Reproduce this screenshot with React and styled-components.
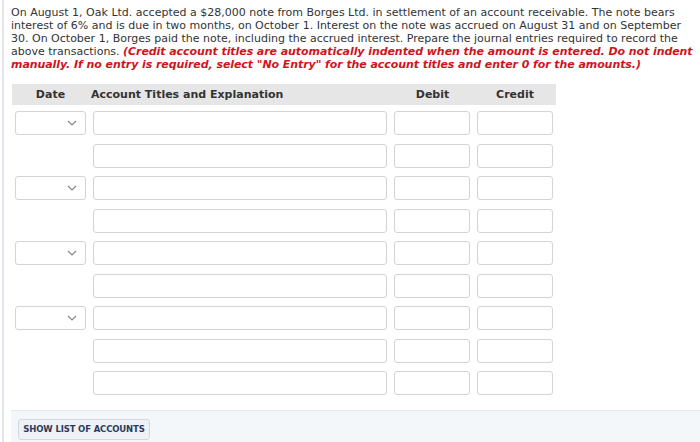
import React from 'react'
import styled, { createGlobalStyle } from 'styled-components'

const Global = createGlobalStyle`
  html, body {
    margin: 0;
    padding: 0;
    background: #fff;
  }
  body {
    font-family: 'DejaVu Sans', Verdana, sans-serif;
    color: #333;
  }
`

const Page = styled.div`
  width: 700px;
  height: 442px;
  overflow: hidden;
  box-sizing: border-box;
  border-left: 2px solid #e4e4ee;
  margin-left: 2px;
  padding: 6px 0 0 7px;
  display: flex;
  flex-direction: column;
`

const Question = styled.p`
  margin: 0;
  font-size: 11px;
  line-height: 13px;
  color: #333;
  white-space: nowrap;
`

const Hint = styled.em`
  color: #d0141c;
  font-weight: bold;
  letter-spacing: -0.07px;
`

const Table = styled.div`
  margin-top: 13px;
  width: 544px;
  margin-left: 1px;
`

const HeadRow = styled.div`
  display: grid;
  grid-template-columns: 77px 302px 83px 82px;
  height: 21px;
  align-items: center;
  background: #e6e6e6;
  font-size: 11px;
  font-weight: bold;
  color: #333;
`

const HeadCell = styled.div`
  text-align: ${p => p.$align || 'center'};
  padding-left: ${p => p.$pad || 0}px;
`

const Rows = styled.div`
  display: flex;
  flex-direction: column;
  gap: 8.5px;
  padding-top: 6px;
`

const Row = styled.div`
  display: grid;
  grid-template-columns: 71px 294px 76px 76px;
  column-gap: 7px;
  padding-left: 3px;
  height: 24px;
`

const Field = styled.div`
  box-sizing: border-box;
  height: 24px;
  border: 1px solid #d4d4d4;
  border-radius: 3px;
  background: #fff;
  box-shadow: inset 0 0 1px rgba(0,0,0,0.05);
`

const Select = styled(Field)`
  display: flex;
  align-items: center;
  justify-content: flex-end;
  padding-right: 8px;
  color: #888;
`

const Blank = styled.div``

const Footer = styled.div`
  margin-top: 15px;
  flex: 1;
  background: #f4f7fa;
  border-top: 1px solid #e3e6ea;
  padding: 6px 7px;
`

const Button = styled.button`
  font-family: 'DejaVu Sans', Verdana, sans-serif;
  font-size: 8.5px;
  font-weight: bold;
  color: #2d3a5a;
  background: #eef1f6;
  border: 1px solid #d3d8e0;
  border-radius: 3px;
  height: 21px;
  width: 132px;
  padding: 0;
  white-space: nowrap;
  letter-spacing: -0.15px;
`

const Chevron = () => (
  <svg width="10" height="6" viewBox="0 0 10 6">
    <path d="M1 1 L5 5 L9 1" fill="none" stroke="#888" strokeWidth="1.2" />
  </svg>
)

const rows = [true, false, true, false, true, false, true, false, false]

export default function App() {
  return (
    <Page>
      <Global />
      <Question>
        On August 1, Oak Ltd. accepted a $28,000 note from Borges Ltd. in settlement of an account receivable. The note bears<br />
        interest of 6% and is due in two months, on October 1. Interest on the note was accrued on August 31 and on September<br />
        30. On October 1, Borges paid the note, including the accrued interest. Prepare the journal entries required to record the<br />
        above transactions. <Hint>(Credit account titles are automatically indented when the amount is entered. Do not indent<br />
        manually. If no entry is required, select "No Entry" for the account titles and enter 0 for the amounts.)</Hint>
      </Question>
      <Table>
        <HeadRow>
          <HeadCell>Date</HeadCell>
          <HeadCell $align="left" $pad={2}>Account Titles and Explanation</HeadCell>
          <HeadCell>Debit</HeadCell>
          <HeadCell>Credit</HeadCell>
        </HeadRow>
        <Rows>
          {rows.map((hasDate, i) => (
            <Row key={i}>
              {hasDate ? <Select><Chevron /></Select> : <Blank />}
              <Field />
              <Field />
              <Field />
            </Row>
          ))}
        </Rows>
      </Table>
      <Footer>
        <Button>SHOW LIST OF ACCOUNTS</Button>
      </Footer>
    </Page>
  )
}
